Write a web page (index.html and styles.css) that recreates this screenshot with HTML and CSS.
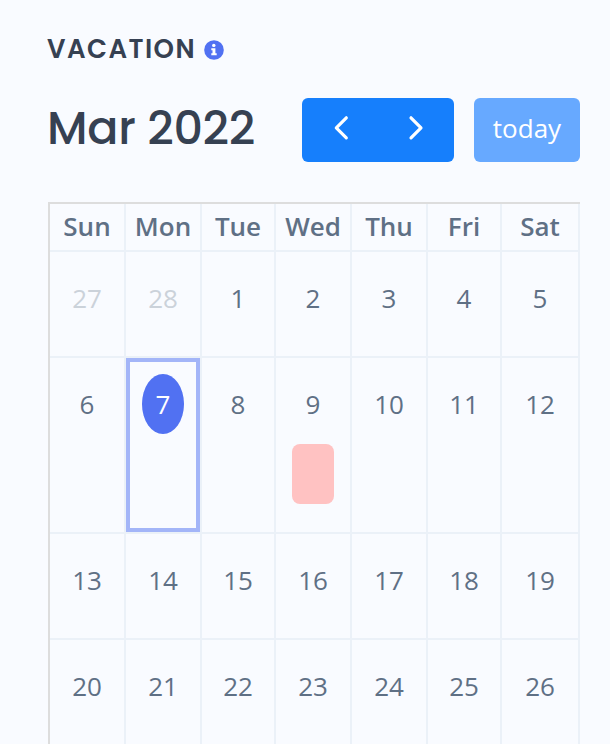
FILE: index.html
```html
<!DOCTYPE html>
<html lang="en">
<head>
    <meta charset="UTF-8">
    <meta name="viewport" content="width=device-width, initial-scale=1.0">
    <title>Vacation</title>
    <link rel="stylesheet" href="styles.css">
</head>
<body>
    <div class="container">
        <div class="header">
            <h2>VACATION</h2>
            <svg class="info-icon" viewBox="0 0 20 20">
                <circle cx="10" cy="10" r="9.8" fill="#5171f2"/>
                <circle cx="9.8" cy="5.4" r="1.7" fill="#fff"/>
                <path d="M7.3 8.3h4.1v5h1.3v1.9H7.3v-1.9h1.2v-3.1H7.3z" fill="#fff"/>
            </svg>
        </div>
        <div class="toolbar">
            <h1>Mar 2022</h1>
            <div class="button-group">
                <button aria-label="Previous month">
                    <svg class="chevron" viewBox="0 0 14 24"><path d="M13.300 1.800L3.300 11.800l10 10"/></svg>
                </button>
                <button aria-label="Next month">
                    <svg class="chevron" viewBox="0 0 14 24"><path d="M2 1.800l10 10-10 10"/></svg>
                </button>
            </div>
            <button class="today-button" disabled>today</button>
        </div>
        <div class="calendar">
            <div class="day-name">Sun</div>
            <div class="day-name">Mon</div>
            <div class="day-name">Tue</div>
            <div class="day-name">Wed</div>
            <div class="day-name">Thu</div>
            <div class="day-name">Fri</div>
            <div class="day-name">Sat</div>

            <div class="day other"><span>27</span></div>
            <div class="day other"><span>28</span></div>
            <div class="day"><span>1</span></div>
            <div class="day"><span>2</span></div>
            <div class="day"><span>3</span></div>
            <div class="day"><span>4</span></div>
            <div class="day"><span>5</span></div>

            <div class="day"><span>6</span></div>
            <div class="day today"><span>7</span></div>
            <div class="day"><span>8</span></div>
            <div class="day"><span>9</span><div class="event"></div></div>
            <div class="day"><span>10</span></div>
            <div class="day"><span>11</span></div>
            <div class="day"><span>12</span></div>

            <div class="day"><span>13</span></div>
            <div class="day"><span>14</span></div>
            <div class="day"><span>15</span></div>
            <div class="day"><span>16</span></div>
            <div class="day"><span>17</span></div>
            <div class="day"><span>18</span></div>
            <div class="day"><span>19</span></div>

            <div class="day"><span>20</span></div>
            <div class="day"><span>21</span></div>
            <div class="day"><span>22</span></div>
            <div class="day"><span>23</span></div>
            <div class="day"><span>24</span></div>
            <div class="day"><span>25</span></div>
            <div class="day"><span>26</span></div>
        </div>
    </div>
</body>
</html>
```
FILE: styles.css
```css
* {
    box-sizing: border-box;
}
body {
    font-family: "Open Sans", "Noto Sans", sans-serif;
    background-color: #f9fbff;
    margin: 0;
    height: 744px;
    overflow: hidden;
    color: #5f7085;
}
.container {
    width: 532px;
    margin-left: 48px;
    padding-top: 34px;
}
h1,
h2 {
    font-family: Poppins, Inter, sans-serif;
    color: #364152;
    margin: 0 0 0 -1px;
    white-space: nowrap;
}
.header {
    display: flex;
    align-items: center;
    height: 30px;
}
.header h2 {
    width: 157px;
    font-size: 26px;
    font-weight: 600;
    line-height: 30px;
    letter-spacing: 1.45px;
}
.info-icon {
    width: 20px;
    height: 20px;
    margin-top: 2px;
}
.toolbar {
    display: flex;
    align-items: center;
    height: 64px;
    margin-top: 34px;
}
.toolbar h1 {
    width: 255px;
    padding-bottom: 4px;
    font-size: 46px;
    font-weight: 500;
    line-height: 60px;
    letter-spacing: -0.3px;
}
button {
    font-family: inherit;
    border: none;
    padding: 0;
    color: white;
    background-color: #167ffc;
    cursor: pointer;
}
.button-group {
    display: flex;
    width: 152px;
    height: 64px;
    border-radius: 6px;
    overflow: hidden;
}
.button-group button {
    display: flex;
    flex: 1;
    align-items: center;
    justify-content: center;
    padding-bottom: 4px;
}
.chevron {
    width: 14px;
    height: 24px;
    overflow: visible;
    fill: none;
    stroke: white;
    stroke-width: 3.2;
    stroke-linecap: round;
    stroke-linejoin: round;
}
.today-button {
    width: 106px;
    height: 64px;
    margin-left: 20px;
    padding-bottom: 4px;
    border-radius: 6px;
    background-color: #67a9ff;
    font-size: 26px;
}
.calendar {
    display: grid;
    grid-template-columns: 76px 76px 74px 76px 76px 74px 78px;
    grid-template-rows: 48px 106px 176px 106px 106px;
    margin-top: 40px;
    border-top: 2px solid #dddddd;
    border-left: 2px solid #dddddd;
}
.day-name,
.day {
    border-right: 2px solid #ebf1f8;
    border-bottom: 2px solid #ebf1f8;
    text-align: center;
    font-size: 26px;
}
.day-name {
    font-weight: 600;
    line-height: 44px;
}
.day {
    display: flex;
    flex-direction: column;
    align-items: center;
    padding-top: 16px;
}
.day span {
    width: 42px;
    height: 60px;
    line-height: 60px;
}
.other {
    color: #cbd2da;
}
/* the outline sits inside the grid lines */
.today {
    box-shadow: inset 0 0 0 4px #a3b5f8;
}
.today span {
    border-radius: 50%;
    background-color: #5171f2;
    color: white;
}
.event {
    width: 42px;
    height: 60px;
    margin-top: 10px;
    border-radius: 8px;
    background-color: #ffc2c2;
}
```
